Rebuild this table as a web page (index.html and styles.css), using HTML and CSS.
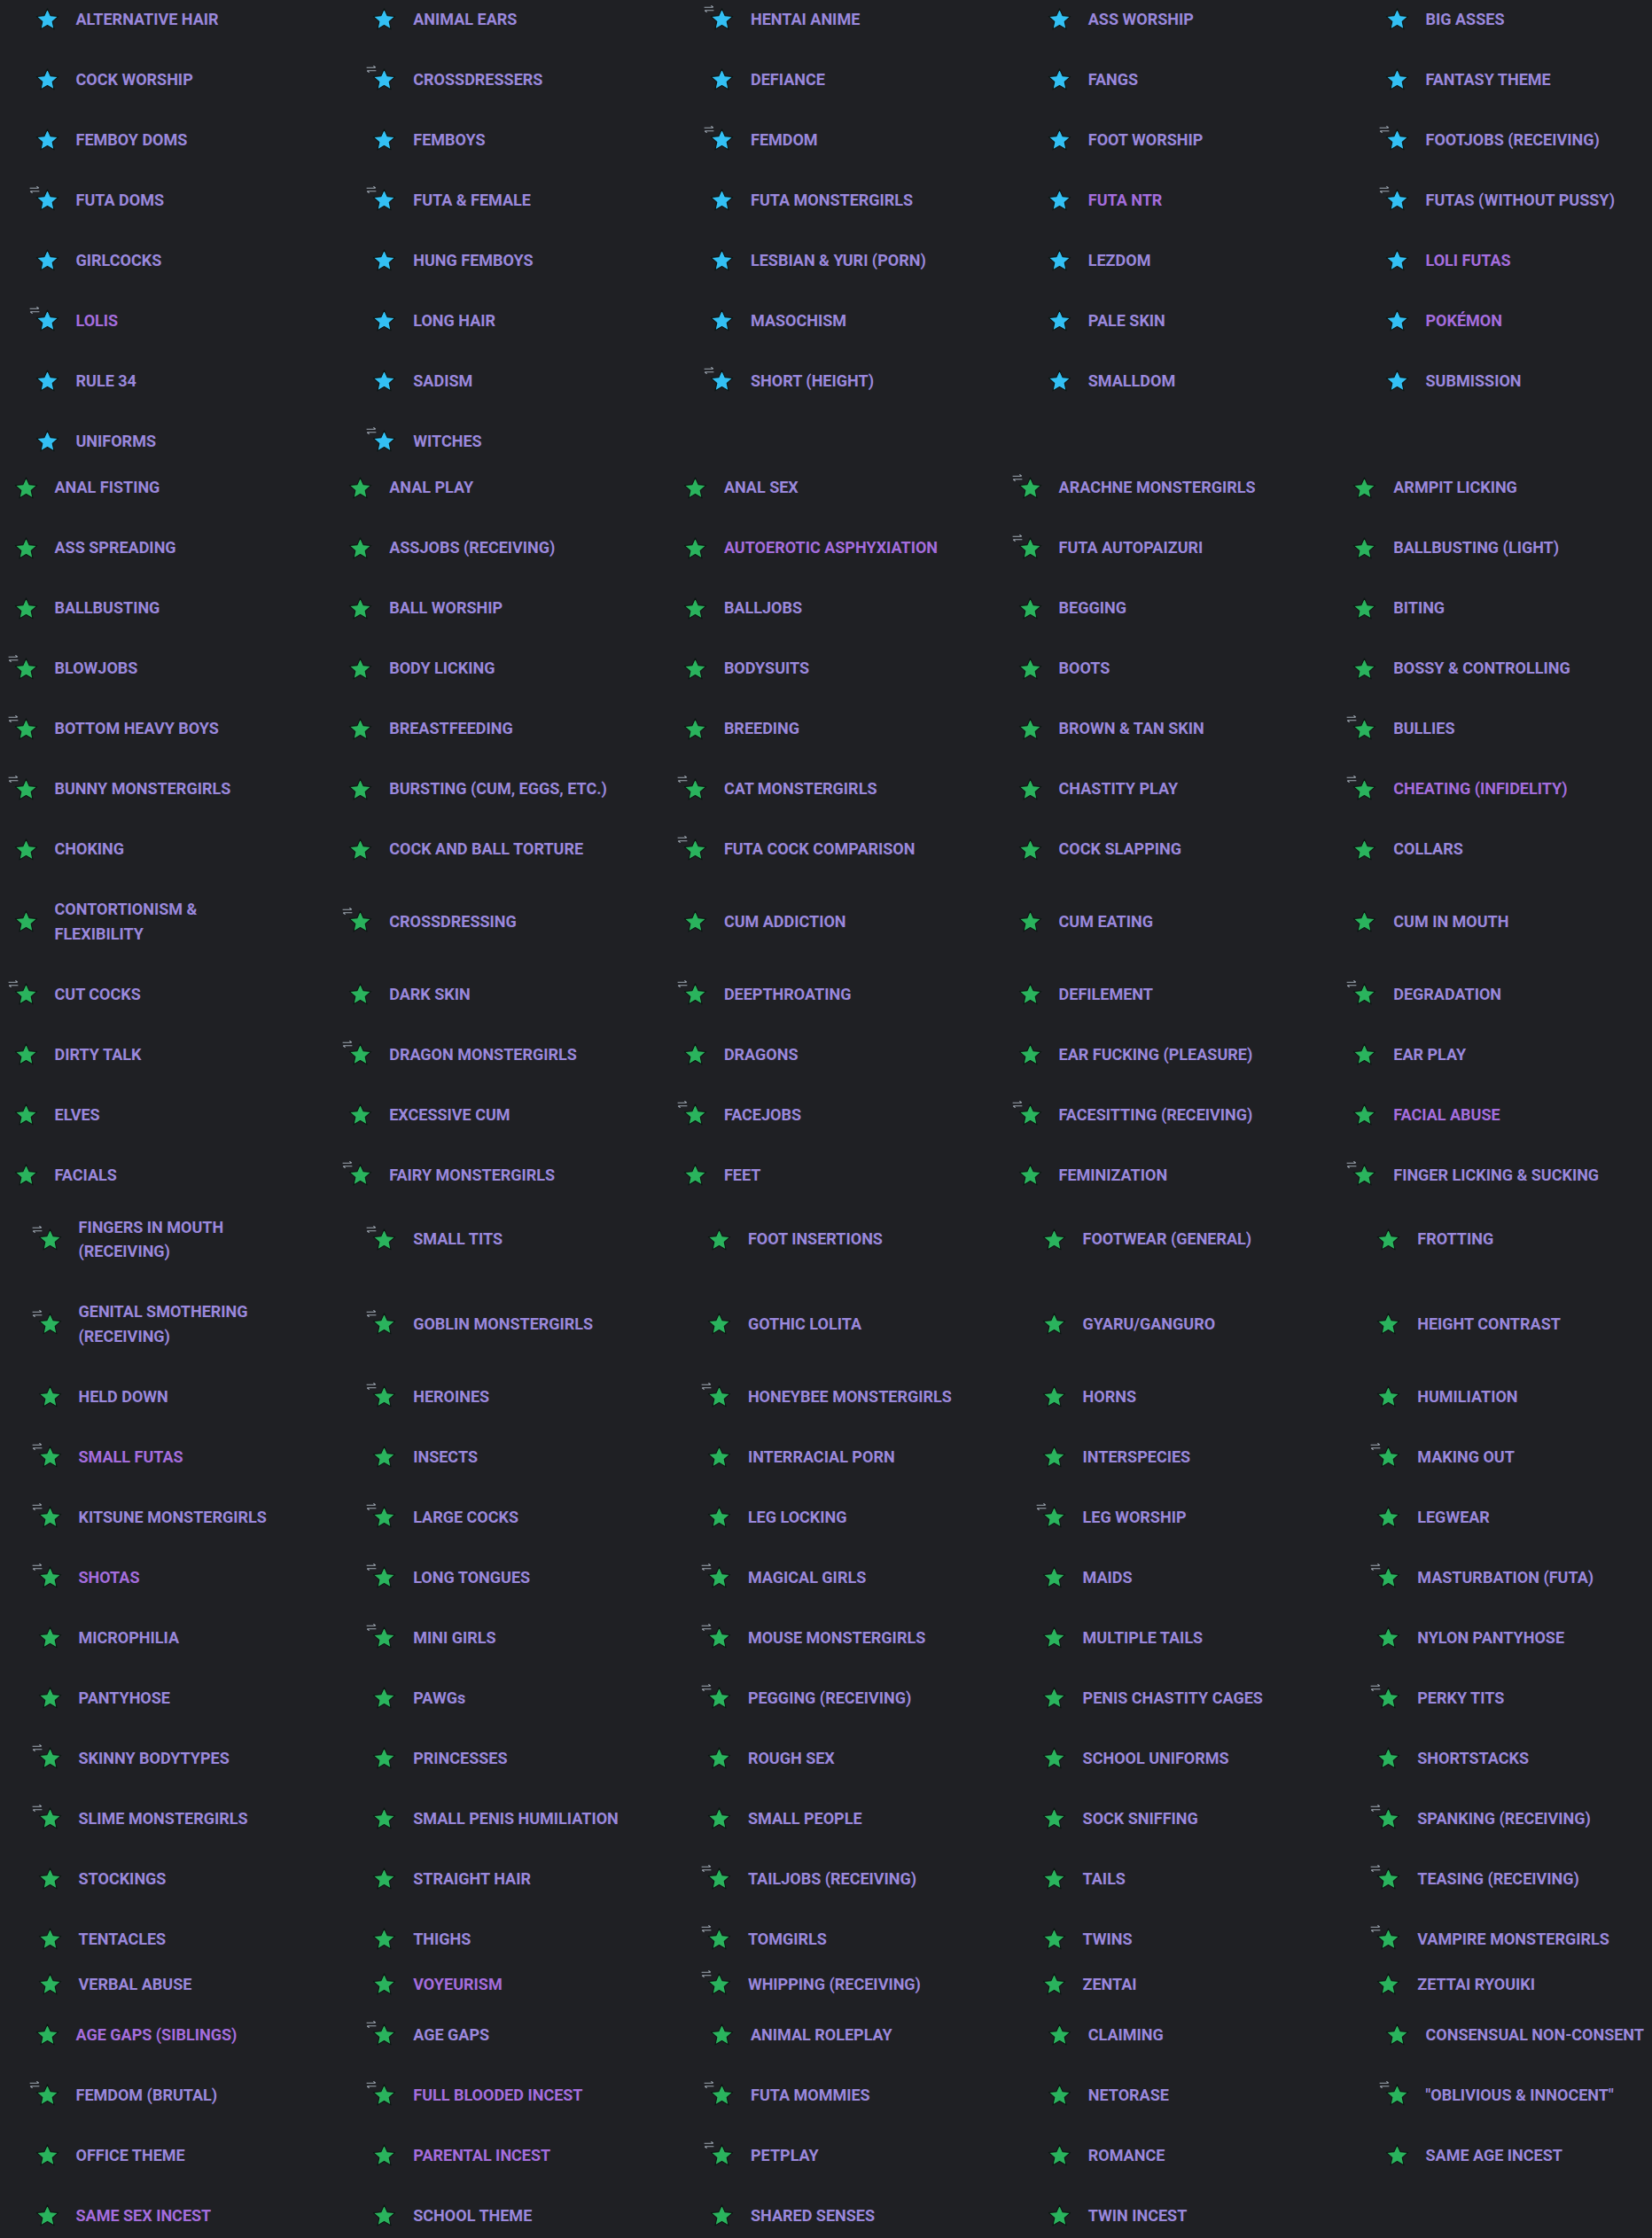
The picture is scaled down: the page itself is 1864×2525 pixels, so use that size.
FILE: index.html
```html
<!DOCTYPE html>
<html lang="en">
<head>
<meta charset="utf-8">
<title>Kinks</title>
<link rel="stylesheet" href="styles.css">
</head>
<body>
<svg class="defs" width="0" height="0" aria-hidden="true">
  <defs>
    <symbol id="st" viewBox="0 0 27 25">
      <polygon points="13.5,0.7 17.03,8.65 25.67,9.55 19.21,15.35 21.02,23.86 13.5,19.5 5.98,23.86 7.79,15.35 1.33,9.55 9.97,8.65" stroke="#0c1512" stroke-width="1.1" stroke-linejoin="round"/>
    </symbol>
    <symbol id="sw" viewBox="0 0 12 8">
      <path d="M0.6 2.2 H10.8 M8.4 0.3 L10.8 2.2 M1.2 5.8 H11.4 M3.6 7.7 L1.2 5.8" fill="none" stroke="#9ea6b1" stroke-width="1.1"/>
    </symbol>
  </defs>
</svg>

<section class="grid wide s1 blue">
  <div class="tag"><span class="ico"><svg class="star"><use href="#st"/></svg></span><span class="name">ALTERNATIVE HAIR</span></div>
  <div class="tag"><span class="ico"><svg class="star"><use href="#st"/></svg></span><span class="name">ANIMAL EARS</span></div>
  <div class="tag"><span class="ico"><svg class="sw"><use href="#sw"/></svg><svg class="star"><use href="#st"/></svg></span><span class="name">HENTAI ANIME</span></div>
  <div class="tag"><span class="ico"><svg class="star"><use href="#st"/></svg></span><span class="name">ASS WORSHIP</span></div>
  <div class="tag"><span class="ico"><svg class="star"><use href="#st"/></svg></span><span class="name">BIG ASSES</span></div>

  <div class="tag"><span class="ico"><svg class="star"><use href="#st"/></svg></span><span class="name">COCK WORSHIP</span></div>
  <div class="tag"><span class="ico"><svg class="sw"><use href="#sw"/></svg><svg class="star"><use href="#st"/></svg></span><span class="name">CROSSDRESSERS</span></div>
  <div class="tag"><span class="ico"><svg class="star"><use href="#st"/></svg></span><span class="name">DEFIANCE</span></div>
  <div class="tag"><span class="ico"><svg class="star"><use href="#st"/></svg></span><span class="name">FANGS</span></div>
  <div class="tag"><span class="ico"><svg class="star"><use href="#st"/></svg></span><span class="name">FANTASY THEME</span></div>

  <div class="tag"><span class="ico"><svg class="star"><use href="#st"/></svg></span><span class="name">FEMBOY DOMS</span></div>
  <div class="tag"><span class="ico"><svg class="star"><use href="#st"/></svg></span><span class="name">FEMBOYS</span></div>
  <div class="tag"><span class="ico"><svg class="sw"><use href="#sw"/></svg><svg class="star"><use href="#st"/></svg></span><span class="name">FEMDOM</span></div>
  <div class="tag"><span class="ico"><svg class="star"><use href="#st"/></svg></span><span class="name">FOOT WORSHIP</span></div>
  <div class="tag"><span class="ico"><svg class="sw"><use href="#sw"/></svg><svg class="star"><use href="#st"/></svg></span><span class="name">FOOTJOBS (RECEIVING)</span></div>

  <div class="tag"><span class="ico"><svg class="sw"><use href="#sw"/></svg><svg class="star"><use href="#st"/></svg></span><span class="name">FUTA DOMS</span></div>
  <div class="tag"><span class="ico"><svg class="sw"><use href="#sw"/></svg><svg class="star"><use href="#st"/></svg></span><span class="name">FUTA &amp; FEMALE</span></div>
  <div class="tag"><span class="ico"><svg class="star"><use href="#st"/></svg></span><span class="name">FUTA MONSTERGIRLS</span></div>
  <div class="tag"><span class="ico"><svg class="star"><use href="#st"/></svg></span><span class="name pink">FUTA NTR</span></div>
  <div class="tag"><span class="ico"><svg class="sw"><use href="#sw"/></svg><svg class="star"><use href="#st"/></svg></span><span class="name">FUTAS (WITHOUT PUSSY)</span></div>

  <div class="tag"><span class="ico"><svg class="star"><use href="#st"/></svg></span><span class="name">GIRLCOCKS</span></div>
  <div class="tag"><span class="ico"><svg class="star"><use href="#st"/></svg></span><span class="name">HUNG FEMBOYS</span></div>
  <div class="tag"><span class="ico"><svg class="star"><use href="#st"/></svg></span><span class="name">LESBIAN &amp; YURI (PORN)</span></div>
  <div class="tag"><span class="ico"><svg class="star"><use href="#st"/></svg></span><span class="name">LEZDOM</span></div>
  <div class="tag"><span class="ico"><svg class="star"><use href="#st"/></svg></span><span class="name pink">LOLI FUTAS</span></div>

  <div class="tag"><span class="ico"><svg class="sw"><use href="#sw"/></svg><svg class="star"><use href="#st"/></svg></span><span class="name pink">LOLIS</span></div>
  <div class="tag"><span class="ico"><svg class="star"><use href="#st"/></svg></span><span class="name">LONG HAIR</span></div>
  <div class="tag"><span class="ico"><svg class="star"><use href="#st"/></svg></span><span class="name">MASOCHISM</span></div>
  <div class="tag"><span class="ico"><svg class="star"><use href="#st"/></svg></span><span class="name">PALE SKIN</span></div>
  <div class="tag"><span class="ico"><svg class="star"><use href="#st"/></svg></span><span class="name pink">POKÉMON</span></div>

  <div class="tag"><span class="ico"><svg class="star"><use href="#st"/></svg></span><span class="name">RULE 34</span></div>
  <div class="tag"><span class="ico"><svg class="star"><use href="#st"/></svg></span><span class="name">SADISM</span></div>
  <div class="tag"><span class="ico"><svg class="sw"><use href="#sw"/></svg><svg class="star"><use href="#st"/></svg></span><span class="name">SHORT (HEIGHT)</span></div>
  <div class="tag"><span class="ico"><svg class="star"><use href="#st"/></svg></span><span class="name">SMALLDOM</span></div>
  <div class="tag"><span class="ico"><svg class="star"><use href="#st"/></svg></span><span class="name">SUBMISSION</span></div>

  <div class="tag"><span class="ico"><svg class="star"><use href="#st"/></svg></span><span class="name">UNIFORMS</span></div>
  <div class="tag"><span class="ico"><svg class="sw"><use href="#sw"/></svg><svg class="star"><use href="#st"/></svg></span><span class="name">WITCHES</span></div>
</section>

<section class="grid narrow s2 green">
  <div class="tag"><span class="ico"><svg class="star"><use href="#st"/></svg></span><span class="name">ANAL FISTING</span></div>
  <div class="tag"><span class="ico"><svg class="star"><use href="#st"/></svg></span><span class="name">ANAL PLAY</span></div>
  <div class="tag"><span class="ico"><svg class="star"><use href="#st"/></svg></span><span class="name">ANAL SEX</span></div>
  <div class="tag"><span class="ico"><svg class="sw"><use href="#sw"/></svg><svg class="star"><use href="#st"/></svg></span><span class="name">ARACHNE MONSTERGIRLS</span></div>
  <div class="tag"><span class="ico"><svg class="star"><use href="#st"/></svg></span><span class="name">ARMPIT LICKING</span></div>

  <div class="tag"><span class="ico"><svg class="star"><use href="#st"/></svg></span><span class="name">ASS SPREADING</span></div>
  <div class="tag"><span class="ico"><svg class="star"><use href="#st"/></svg></span><span class="name">ASSJOBS (RECEIVING)</span></div>
  <div class="tag"><span class="ico"><svg class="star"><use href="#st"/></svg></span><span class="name pink">AUTOEROTIC ASPHYXIATION</span></div>
  <div class="tag"><span class="ico"><svg class="sw"><use href="#sw"/></svg><svg class="star"><use href="#st"/></svg></span><span class="name">FUTA AUTOPAIZURI</span></div>
  <div class="tag"><span class="ico"><svg class="star"><use href="#st"/></svg></span><span class="name">BALLBUSTING (LIGHT)</span></div>

  <div class="tag"><span class="ico"><svg class="star"><use href="#st"/></svg></span><span class="name">BALLBUSTING</span></div>
  <div class="tag"><span class="ico"><svg class="star"><use href="#st"/></svg></span><span class="name">BALL WORSHIP</span></div>
  <div class="tag"><span class="ico"><svg class="star"><use href="#st"/></svg></span><span class="name">BALLJOBS</span></div>
  <div class="tag"><span class="ico"><svg class="star"><use href="#st"/></svg></span><span class="name">BEGGING</span></div>
  <div class="tag"><span class="ico"><svg class="star"><use href="#st"/></svg></span><span class="name">BITING</span></div>

  <div class="tag"><span class="ico"><svg class="sw"><use href="#sw"/></svg><svg class="star"><use href="#st"/></svg></span><span class="name">BLOWJOBS</span></div>
  <div class="tag"><span class="ico"><svg class="star"><use href="#st"/></svg></span><span class="name">BODY LICKING</span></div>
  <div class="tag"><span class="ico"><svg class="star"><use href="#st"/></svg></span><span class="name">BODYSUITS</span></div>
  <div class="tag"><span class="ico"><svg class="star"><use href="#st"/></svg></span><span class="name">BOOTS</span></div>
  <div class="tag"><span class="ico"><svg class="star"><use href="#st"/></svg></span><span class="name">BOSSY &amp; CONTROLLING</span></div>

  <div class="tag"><span class="ico"><svg class="sw"><use href="#sw"/></svg><svg class="star"><use href="#st"/></svg></span><span class="name">BOTTOM HEAVY BOYS</span></div>
  <div class="tag"><span class="ico"><svg class="star"><use href="#st"/></svg></span><span class="name">BREASTFEEDING</span></div>
  <div class="tag"><span class="ico"><svg class="star"><use href="#st"/></svg></span><span class="name">BREEDING</span></div>
  <div class="tag"><span class="ico"><svg class="star"><use href="#st"/></svg></span><span class="name">BROWN &amp; TAN SKIN</span></div>
  <div class="tag"><span class="ico"><svg class="sw"><use href="#sw"/></svg><svg class="star"><use href="#st"/></svg></span><span class="name">BULLIES</span></div>

  <div class="tag"><span class="ico"><svg class="sw"><use href="#sw"/></svg><svg class="star"><use href="#st"/></svg></span><span class="name">BUNNY MONSTERGIRLS</span></div>
  <div class="tag"><span class="ico"><svg class="star"><use href="#st"/></svg></span><span class="name">BURSTING (CUM, EGGS, ETC.)</span></div>
  <div class="tag"><span class="ico"><svg class="sw"><use href="#sw"/></svg><svg class="star"><use href="#st"/></svg></span><span class="name">CAT MONSTERGIRLS</span></div>
  <div class="tag"><span class="ico"><svg class="star"><use href="#st"/></svg></span><span class="name">CHASTITY PLAY</span></div>
  <div class="tag"><span class="ico"><svg class="sw"><use href="#sw"/></svg><svg class="star"><use href="#st"/></svg></span><span class="name pink">CHEATING (INFIDELITY)</span></div>

  <div class="tag"><span class="ico"><svg class="star"><use href="#st"/></svg></span><span class="name">CHOKING</span></div>
  <div class="tag"><span class="ico"><svg class="star"><use href="#st"/></svg></span><span class="name">COCK AND BALL TORTURE</span></div>
  <div class="tag"><span class="ico"><svg class="sw"><use href="#sw"/></svg><svg class="star"><use href="#st"/></svg></span><span class="name">FUTA COCK COMPARISON</span></div>
  <div class="tag"><span class="ico"><svg class="star"><use href="#st"/></svg></span><span class="name">COCK SLAPPING</span></div>
  <div class="tag"><span class="ico"><svg class="star"><use href="#st"/></svg></span><span class="name">COLLARS</span></div>

  <div class="tag"><span class="ico"><svg class="star"><use href="#st"/></svg></span><span class="name">CONTORTIONISM &amp; FLEXIBILITY</span></div>
  <div class="tag"><span class="ico"><svg class="sw"><use href="#sw"/></svg><svg class="star"><use href="#st"/></svg></span><span class="name">CROSSDRESSING</span></div>
  <div class="tag"><span class="ico"><svg class="star"><use href="#st"/></svg></span><span class="name">CUM ADDICTION</span></div>
  <div class="tag"><span class="ico"><svg class="star"><use href="#st"/></svg></span><span class="name">CUM EATING</span></div>
  <div class="tag"><span class="ico"><svg class="star"><use href="#st"/></svg></span><span class="name">CUM IN MOUTH</span></div>

  <div class="tag"><span class="ico"><svg class="sw"><use href="#sw"/></svg><svg class="star"><use href="#st"/></svg></span><span class="name">CUT COCKS</span></div>
  <div class="tag"><span class="ico"><svg class="star"><use href="#st"/></svg></span><span class="name">DARK SKIN</span></div>
  <div class="tag"><span class="ico"><svg class="sw"><use href="#sw"/></svg><svg class="star"><use href="#st"/></svg></span><span class="name">DEEPTHROATING</span></div>
  <div class="tag"><span class="ico"><svg class="star"><use href="#st"/></svg></span><span class="name">DEFILEMENT</span></div>
  <div class="tag"><span class="ico"><svg class="sw"><use href="#sw"/></svg><svg class="star"><use href="#st"/></svg></span><span class="name">DEGRADATION</span></div>

  <div class="tag"><span class="ico"><svg class="star"><use href="#st"/></svg></span><span class="name">DIRTY TALK</span></div>
  <div class="tag"><span class="ico"><svg class="sw"><use href="#sw"/></svg><svg class="star"><use href="#st"/></svg></span><span class="name">DRAGON MONSTERGIRLS</span></div>
  <div class="tag"><span class="ico"><svg class="star"><use href="#st"/></svg></span><span class="name">DRAGONS</span></div>
  <div class="tag"><span class="ico"><svg class="star"><use href="#st"/></svg></span><span class="name">EAR FUCKING (PLEASURE)</span></div>
  <div class="tag"><span class="ico"><svg class="star"><use href="#st"/></svg></span><span class="name">EAR PLAY</span></div>

  <div class="tag"><span class="ico"><svg class="star"><use href="#st"/></svg></span><span class="name">ELVES</span></div>
  <div class="tag"><span class="ico"><svg class="star"><use href="#st"/></svg></span><span class="name">EXCESSIVE CUM</span></div>
  <div class="tag"><span class="ico"><svg class="sw"><use href="#sw"/></svg><svg class="star"><use href="#st"/></svg></span><span class="name">FACEJOBS</span></div>
  <div class="tag"><span class="ico"><svg class="sw"><use href="#sw"/></svg><svg class="star"><use href="#st"/></svg></span><span class="name">FACESITTING (RECEIVING)</span></div>
  <div class="tag"><span class="ico"><svg class="star"><use href="#st"/></svg></span><span class="name pink">FACIAL ABUSE</span></div>

  <div class="tag"><span class="ico"><svg class="star"><use href="#st"/></svg></span><span class="name">FACIALS</span></div>
  <div class="tag"><span class="ico"><svg class="sw"><use href="#sw"/></svg><svg class="star"><use href="#st"/></svg></span><span class="name">FAIRY MONSTERGIRLS</span></div>
  <div class="tag"><span class="ico"><svg class="star"><use href="#st"/></svg></span><span class="name">FEET</span></div>
  <div class="tag"><span class="ico"><svg class="star"><use href="#st"/></svg></span><span class="name">FEMINIZATION</span></div>
  <div class="tag"><span class="ico"><svg class="sw"><use href="#sw"/></svg><svg class="star"><use href="#st"/></svg></span><span class="name">FINGER LICKING &amp; SUCKING</span></div>
</section>

<section class="grid narrow s3 green">
  <div class="tag"><span class="ico"><svg class="sw"><use href="#sw"/></svg><svg class="star"><use href="#st"/></svg></span><span class="name">FINGERS IN MOUTH (RECEIVING)</span></div>
  <div class="tag"><span class="ico"><svg class="sw"><use href="#sw"/></svg><svg class="star"><use href="#st"/></svg></span><span class="name">SMALL TITS</span></div>
  <div class="tag"><span class="ico"><svg class="star"><use href="#st"/></svg></span><span class="name">FOOT INSERTIONS</span></div>
  <div class="tag"><span class="ico"><svg class="star"><use href="#st"/></svg></span><span class="name">FOOTWEAR (GENERAL)</span></div>
  <div class="tag"><span class="ico"><svg class="star"><use href="#st"/></svg></span><span class="name">FROTTING</span></div>

  <div class="tag"><span class="ico"><svg class="sw"><use href="#sw"/></svg><svg class="star"><use href="#st"/></svg></span><span class="name">GENITAL SMOTHERING (RECEIVING)</span></div>
  <div class="tag"><span class="ico"><svg class="sw"><use href="#sw"/></svg><svg class="star"><use href="#st"/></svg></span><span class="name">GOBLIN MONSTERGIRLS</span></div>
  <div class="tag"><span class="ico"><svg class="star"><use href="#st"/></svg></span><span class="name">GOTHIC LOLITA</span></div>
  <div class="tag"><span class="ico"><svg class="star"><use href="#st"/></svg></span><span class="name">GYARU/GANGURO</span></div>
  <div class="tag"><span class="ico"><svg class="star"><use href="#st"/></svg></span><span class="name">HEIGHT CONTRAST</span></div>

  <div class="tag"><span class="ico"><svg class="star"><use href="#st"/></svg></span><span class="name">HELD DOWN</span></div>
  <div class="tag"><span class="ico"><svg class="sw"><use href="#sw"/></svg><svg class="star"><use href="#st"/></svg></span><span class="name">HEROINES</span></div>
  <div class="tag"><span class="ico"><svg class="sw"><use href="#sw"/></svg><svg class="star"><use href="#st"/></svg></span><span class="name">HONEYBEE MONSTERGIRLS</span></div>
  <div class="tag"><span class="ico"><svg class="star"><use href="#st"/></svg></span><span class="name">HORNS</span></div>
  <div class="tag"><span class="ico"><svg class="star"><use href="#st"/></svg></span><span class="name">HUMILIATION</span></div>

  <div class="tag"><span class="ico"><svg class="sw"><use href="#sw"/></svg><svg class="star"><use href="#st"/></svg></span><span class="name pink">SMALL FUTAS</span></div>
  <div class="tag"><span class="ico"><svg class="star"><use href="#st"/></svg></span><span class="name">INSECTS</span></div>
  <div class="tag"><span class="ico"><svg class="star"><use href="#st"/></svg></span><span class="name">INTERRACIAL PORN</span></div>
  <div class="tag"><span class="ico"><svg class="star"><use href="#st"/></svg></span><span class="name">INTERSPECIES</span></div>
  <div class="tag"><span class="ico"><svg class="sw"><use href="#sw"/></svg><svg class="star"><use href="#st"/></svg></span><span class="name">MAKING OUT</span></div>

  <div class="tag"><span class="ico"><svg class="sw"><use href="#sw"/></svg><svg class="star"><use href="#st"/></svg></span><span class="name">KITSUNE MONSTERGIRLS</span></div>
  <div class="tag"><span class="ico"><svg class="sw"><use href="#sw"/></svg><svg class="star"><use href="#st"/></svg></span><span class="name">LARGE COCKS</span></div>
  <div class="tag"><span class="ico"><svg class="star"><use href="#st"/></svg></span><span class="name">LEG LOCKING</span></div>
  <div class="tag"><span class="ico"><svg class="sw"><use href="#sw"/></svg><svg class="star"><use href="#st"/></svg></span><span class="name">LEG WORSHIP</span></div>
  <div class="tag"><span class="ico"><svg class="star"><use href="#st"/></svg></span><span class="name">LEGWEAR</span></div>

  <div class="tag"><span class="ico"><svg class="sw"><use href="#sw"/></svg><svg class="star"><use href="#st"/></svg></span><span class="name pink">SHOTAS</span></div>
  <div class="tag"><span class="ico"><svg class="sw"><use href="#sw"/></svg><svg class="star"><use href="#st"/></svg></span><span class="name">LONG TONGUES</span></div>
  <div class="tag"><span class="ico"><svg class="sw"><use href="#sw"/></svg><svg class="star"><use href="#st"/></svg></span><span class="name">MAGICAL GIRLS</span></div>
  <div class="tag"><span class="ico"><svg class="star"><use href="#st"/></svg></span><span class="name">MAIDS</span></div>
  <div class="tag"><span class="ico"><svg class="sw"><use href="#sw"/></svg><svg class="star"><use href="#st"/></svg></span><span class="name">MASTURBATION (FUTA)</span></div>

  <div class="tag"><span class="ico"><svg class="star"><use href="#st"/></svg></span><span class="name">MICROPHILIA</span></div>
  <div class="tag"><span class="ico"><svg class="sw"><use href="#sw"/></svg><svg class="star"><use href="#st"/></svg></span><span class="name">MINI GIRLS</span></div>
  <div class="tag"><span class="ico"><svg class="sw"><use href="#sw"/></svg><svg class="star"><use href="#st"/></svg></span><span class="name">MOUSE MONSTERGIRLS</span></div>
  <div class="tag"><span class="ico"><svg class="star"><use href="#st"/></svg></span><span class="name">MULTIPLE TAILS</span></div>
  <div class="tag"><span class="ico"><svg class="star"><use href="#st"/></svg></span><span class="name">NYLON PANTYHOSE</span></div>

  <div class="tag"><span class="ico"><svg class="star"><use href="#st"/></svg></span><span class="name">PANTYHOSE</span></div>
  <div class="tag"><span class="ico"><svg class="star"><use href="#st"/></svg></span><span class="name">PAWGs</span></div>
  <div class="tag"><span class="ico"><svg class="sw"><use href="#sw"/></svg><svg class="star"><use href="#st"/></svg></span><span class="name">PEGGING (RECEIVING)</span></div>
  <div class="tag"><span class="ico"><svg class="star"><use href="#st"/></svg></span><span class="name">PENIS CHASTITY CAGES</span></div>
  <div class="tag"><span class="ico"><svg class="sw"><use href="#sw"/></svg><svg class="star"><use href="#st"/></svg></span><span class="name">PERKY TITS</span></div>

  <div class="tag"><span class="ico"><svg class="sw"><use href="#sw"/></svg><svg class="star"><use href="#st"/></svg></span><span class="name">SKINNY BODYTYPES</span></div>
  <div class="tag"><span class="ico"><svg class="star"><use href="#st"/></svg></span><span class="name">PRINCESSES</span></div>
  <div class="tag"><span class="ico"><svg class="star"><use href="#st"/></svg></span><span class="name">ROUGH SEX</span></div>
  <div class="tag"><span class="ico"><svg class="star"><use href="#st"/></svg></span><span class="name">SCHOOL UNIFORMS</span></div>
  <div class="tag"><span class="ico"><svg class="star"><use href="#st"/></svg></span><span class="name">SHORTSTACKS</span></div>

  <div class="tag"><span class="ico"><svg class="sw"><use href="#sw"/></svg><svg class="star"><use href="#st"/></svg></span><span class="name">SLIME MONSTERGIRLS</span></div>
  <div class="tag"><span class="ico"><svg class="star"><use href="#st"/></svg></span><span class="name">SMALL PENIS HUMILIATION</span></div>
  <div class="tag"><span class="ico"><svg class="star"><use href="#st"/></svg></span><span class="name">SMALL PEOPLE</span></div>
  <div class="tag"><span class="ico"><svg class="star"><use href="#st"/></svg></span><span class="name">SOCK SNIFFING</span></div>
  <div class="tag"><span class="ico"><svg class="sw"><use href="#sw"/></svg><svg class="star"><use href="#st"/></svg></span><span class="name">SPANKING (RECEIVING)</span></div>

  <div class="tag"><span class="ico"><svg class="star"><use href="#st"/></svg></span><span class="name">STOCKINGS</span></div>
  <div class="tag"><span class="ico"><svg class="star"><use href="#st"/></svg></span><span class="name">STRAIGHT HAIR</span></div>
  <div class="tag"><span class="ico"><svg class="sw"><use href="#sw"/></svg><svg class="star"><use href="#st"/></svg></span><span class="name">TAILJOBS (RECEIVING)</span></div>
  <div class="tag"><span class="ico"><svg class="star"><use href="#st"/></svg></span><span class="name">TAILS</span></div>
  <div class="tag"><span class="ico"><svg class="sw"><use href="#sw"/></svg><svg class="star"><use href="#st"/></svg></span><span class="name">TEASING (RECEIVING)</span></div>

  <div class="tag"><span class="ico"><svg class="star"><use href="#st"/></svg></span><span class="name">TENTACLES</span></div>
  <div class="tag"><span class="ico"><svg class="star"><use href="#st"/></svg></span><span class="name">THIGHS</span></div>
  <div class="tag"><span class="ico"><svg class="sw"><use href="#sw"/></svg><svg class="star"><use href="#st"/></svg></span><span class="name">TOMGIRLS</span></div>
  <div class="tag"><span class="ico"><svg class="star"><use href="#st"/></svg></span><span class="name">TWINS</span></div>
  <div class="tag"><span class="ico"><svg class="sw"><use href="#sw"/></svg><svg class="star"><use href="#st"/></svg></span><span class="name">VAMPIRE MONSTERGIRLS</span></div>
</section>

<section class="grid narrow s3b green">
  <div class="tag"><span class="ico"><svg class="star"><use href="#st"/></svg></span><span class="name">VERBAL ABUSE</span></div>
  <div class="tag"><span class="ico"><svg class="star"><use href="#st"/></svg></span><span class="name pink">VOYEURISM</span></div>
  <div class="tag"><span class="ico"><svg class="sw"><use href="#sw"/></svg><svg class="star"><use href="#st"/></svg></span><span class="name">WHIPPING (RECEIVING)</span></div>
  <div class="tag"><span class="ico"><svg class="star"><use href="#st"/></svg></span><span class="name">ZENTAI</span></div>
  <div class="tag"><span class="ico"><svg class="star"><use href="#st"/></svg></span><span class="name">ZETTAI RYOUIKI</span></div>
</section>

<section class="grid wide s4 green">
  <div class="tag"><span class="ico"><svg class="star"><use href="#st"/></svg></span><span class="name pink">AGE GAPS (SIBLINGS)</span></div>
  <div class="tag"><span class="ico"><svg class="sw"><use href="#sw"/></svg><svg class="star"><use href="#st"/></svg></span><span class="name">AGE GAPS</span></div>
  <div class="tag"><span class="ico"><svg class="star"><use href="#st"/></svg></span><span class="name">ANIMAL ROLEPLAY</span></div>
  <div class="tag"><span class="ico"><svg class="star"><use href="#st"/></svg></span><span class="name">CLAIMING</span></div>
  <div class="tag"><span class="ico"><svg class="star"><use href="#st"/></svg></span><span class="name">CONSENSUAL NON-CONSENT</span></div>

  <div class="tag"><span class="ico"><svg class="sw"><use href="#sw"/></svg><svg class="star"><use href="#st"/></svg></span><span class="name">FEMDOM (BRUTAL)</span></div>
  <div class="tag"><span class="ico"><svg class="sw"><use href="#sw"/></svg><svg class="star"><use href="#st"/></svg></span><span class="name pink">FULL BLOODED INCEST</span></div>
  <div class="tag"><span class="ico"><svg class="sw"><use href="#sw"/></svg><svg class="star"><use href="#st"/></svg></span><span class="name">FUTA MOMMIES</span></div>
  <div class="tag"><span class="ico"><svg class="star"><use href="#st"/></svg></span><span class="name">NETORASE</span></div>
  <div class="tag"><span class="ico"><svg class="sw"><use href="#sw"/></svg><svg class="star"><use href="#st"/></svg></span><span class="name">"OBLIVIOUS &amp; INNOCENT"</span></div>

  <div class="tag"><span class="ico"><svg class="star"><use href="#st"/></svg></span><span class="name">OFFICE THEME</span></div>
  <div class="tag"><span class="ico"><svg class="star"><use href="#st"/></svg></span><span class="name pink">PARENTAL INCEST</span></div>
  <div class="tag"><span class="ico"><svg class="sw"><use href="#sw"/></svg><svg class="star"><use href="#st"/></svg></span><span class="name">PETPLAY</span></div>
  <div class="tag"><span class="ico"><svg class="star"><use href="#st"/></svg></span><span class="name">ROMANCE</span></div>
  <div class="tag"><span class="ico"><svg class="star"><use href="#st"/></svg></span><span class="name">SAME AGE INCEST</span></div>

  <div class="tag"><span class="ico"><svg class="star"><use href="#st"/></svg></span><span class="name pink">SAME SEX INCEST</span></div>
  <div class="tag"><span class="ico"><svg class="star"><use href="#st"/></svg></span><span class="name">SCHOOL THEME</span></div>
  <div class="tag"><span class="ico"><svg class="star"><use href="#st"/></svg></span><span class="name">SHARED SENSES</span></div>
  <div class="tag"><span class="ico"><svg class="star"><use href="#st"/></svg></span><span class="name">TWIN INCEST</span></div>
</section>
</body>
</html>
```

FILE: styles.css
```css
html, body {
  margin: 0;
  padding: 0;
  overflow: hidden;
  background: #1f2024;
}

body {
  font-family: Roboto, "Liberation Sans", Arial, sans-serif;
  -webkit-font-smoothing: antialiased;
}

.defs {
  position: absolute;
  width: 0;
  height: 0;
  overflow: hidden;
}

.grid {
  display: grid;
  width: max-content;
}

.wide {
  grid-template-columns: repeat(5, 380.75px);
  padding-left: 39.5px;
}

.narrow {
  grid-template-columns: repeat(5, 377.7px);
}

.s1 { margin-top: -12.3px; }
.s2 { margin-top: -15.7px; padding-left: 15.5px; }
.s3 { margin-top: -9.25px; padding-left: 42.5px; }
.s3b { margin-top: -16.55px; padding-left: 42.5px; }
.s4 { margin-top: -11px; }

.blue { fill: #33c0f4; }
.green { fill: #2ab35d; }

.tag {
  display: flex;
  align-items: center;
  gap: 19px;
  padding: 20.25px 0;
}

.ico {
  position: relative;
  flex: none;
  width: 27px;
  height: 25px;
}

.star {
  display: block;
  width: 27px;
  height: 25px;
}

.sw {
  position: absolute;
  left: -7px;
  top: -3px;
  width: 12px;
  height: 8px;
}

.name {
  font-size: 18px;
  font-weight: 700;
  line-height: 27.5px;
  color: #9a88dc;
  max-width: 256px;
}

.name.pink {
  color: #a46ddd;
}
```
